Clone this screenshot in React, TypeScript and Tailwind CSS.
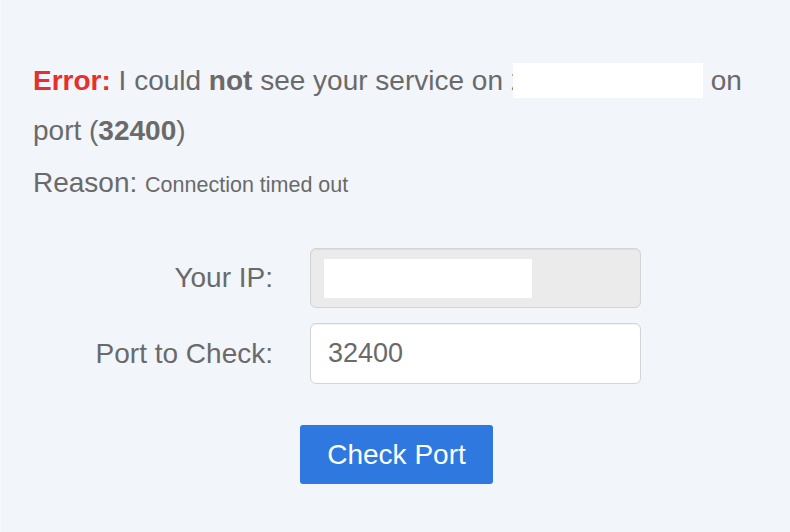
import React from "react";

export default function App() {
  return (
    <div
      className="w-[790px] h-[532px] bg-[#f2f5fa] text-[#6a6a6a] overflow-hidden border-l border-[#f8f9fb]"
      style={{ fontFamily: '"Liberation Sans", Arial, sans-serif' }}
    >
      <div className="px-[32px] pt-[56px] pr-[40px]">
        <p className="text-[28px] leading-[50px]">
          <span className="text-[#e8302a] font-bold">Error:</span> I could{" "}
          <span className="font-bold">not</span> see your service on{" "}
          <span className="inline-block w-[4px] overflow-hidden align-top">2</span>
          <span className="inline-block w-[190px] h-[35px] bg-white align-[-8px] mr-[8px] -ml-[2px]"></span>
          on port (<span className="font-bold">32400</span>)
        </p>
        <p className="text-[28px] leading-[50px] mt-[2px]">
          Reason: <span className="text-[21.5px]">Connection timed out</span>
        </p>
      </div>
      <div className="mt-[38px] flex flex-col gap-[15px]">
        <div className="flex items-center">
          <label className="w-[272px] text-right text-[28px]">Your IP:</label>
          <div className="ml-[37px] w-[331px] h-[60px] rounded-[6px] border border-[#d4d4d4] bg-[#ebebeb] flex items-center pl-[13px] shadow-[inset_0_1px_1px_rgba(0,0,0,0.06)]">
            <div className="w-[208px] h-[39px] bg-white"></div>
          </div>
        </div>
        <div className="flex items-center">
          <label className="w-[272px] text-right text-[28px]">Port to Check:</label>
          <div className="ml-[37px] w-[331px] h-[61px] rounded-[6px] border border-[#d4d4d4] bg-white flex items-center pl-[17px] text-[27px] shadow-[inset_0_1px_1px_rgba(0,0,0,0.06)]">
            32400
          </div>
        </div>
      </div>
      <div className="mt-[41px] flex justify-center pl-[2px]">
        <button className="w-[193px] h-[59px] rounded-[3px] bg-[#2f78e0] text-white text-[28px]">
          Check Port
        </button>
      </div>
    </div>
  );
}
